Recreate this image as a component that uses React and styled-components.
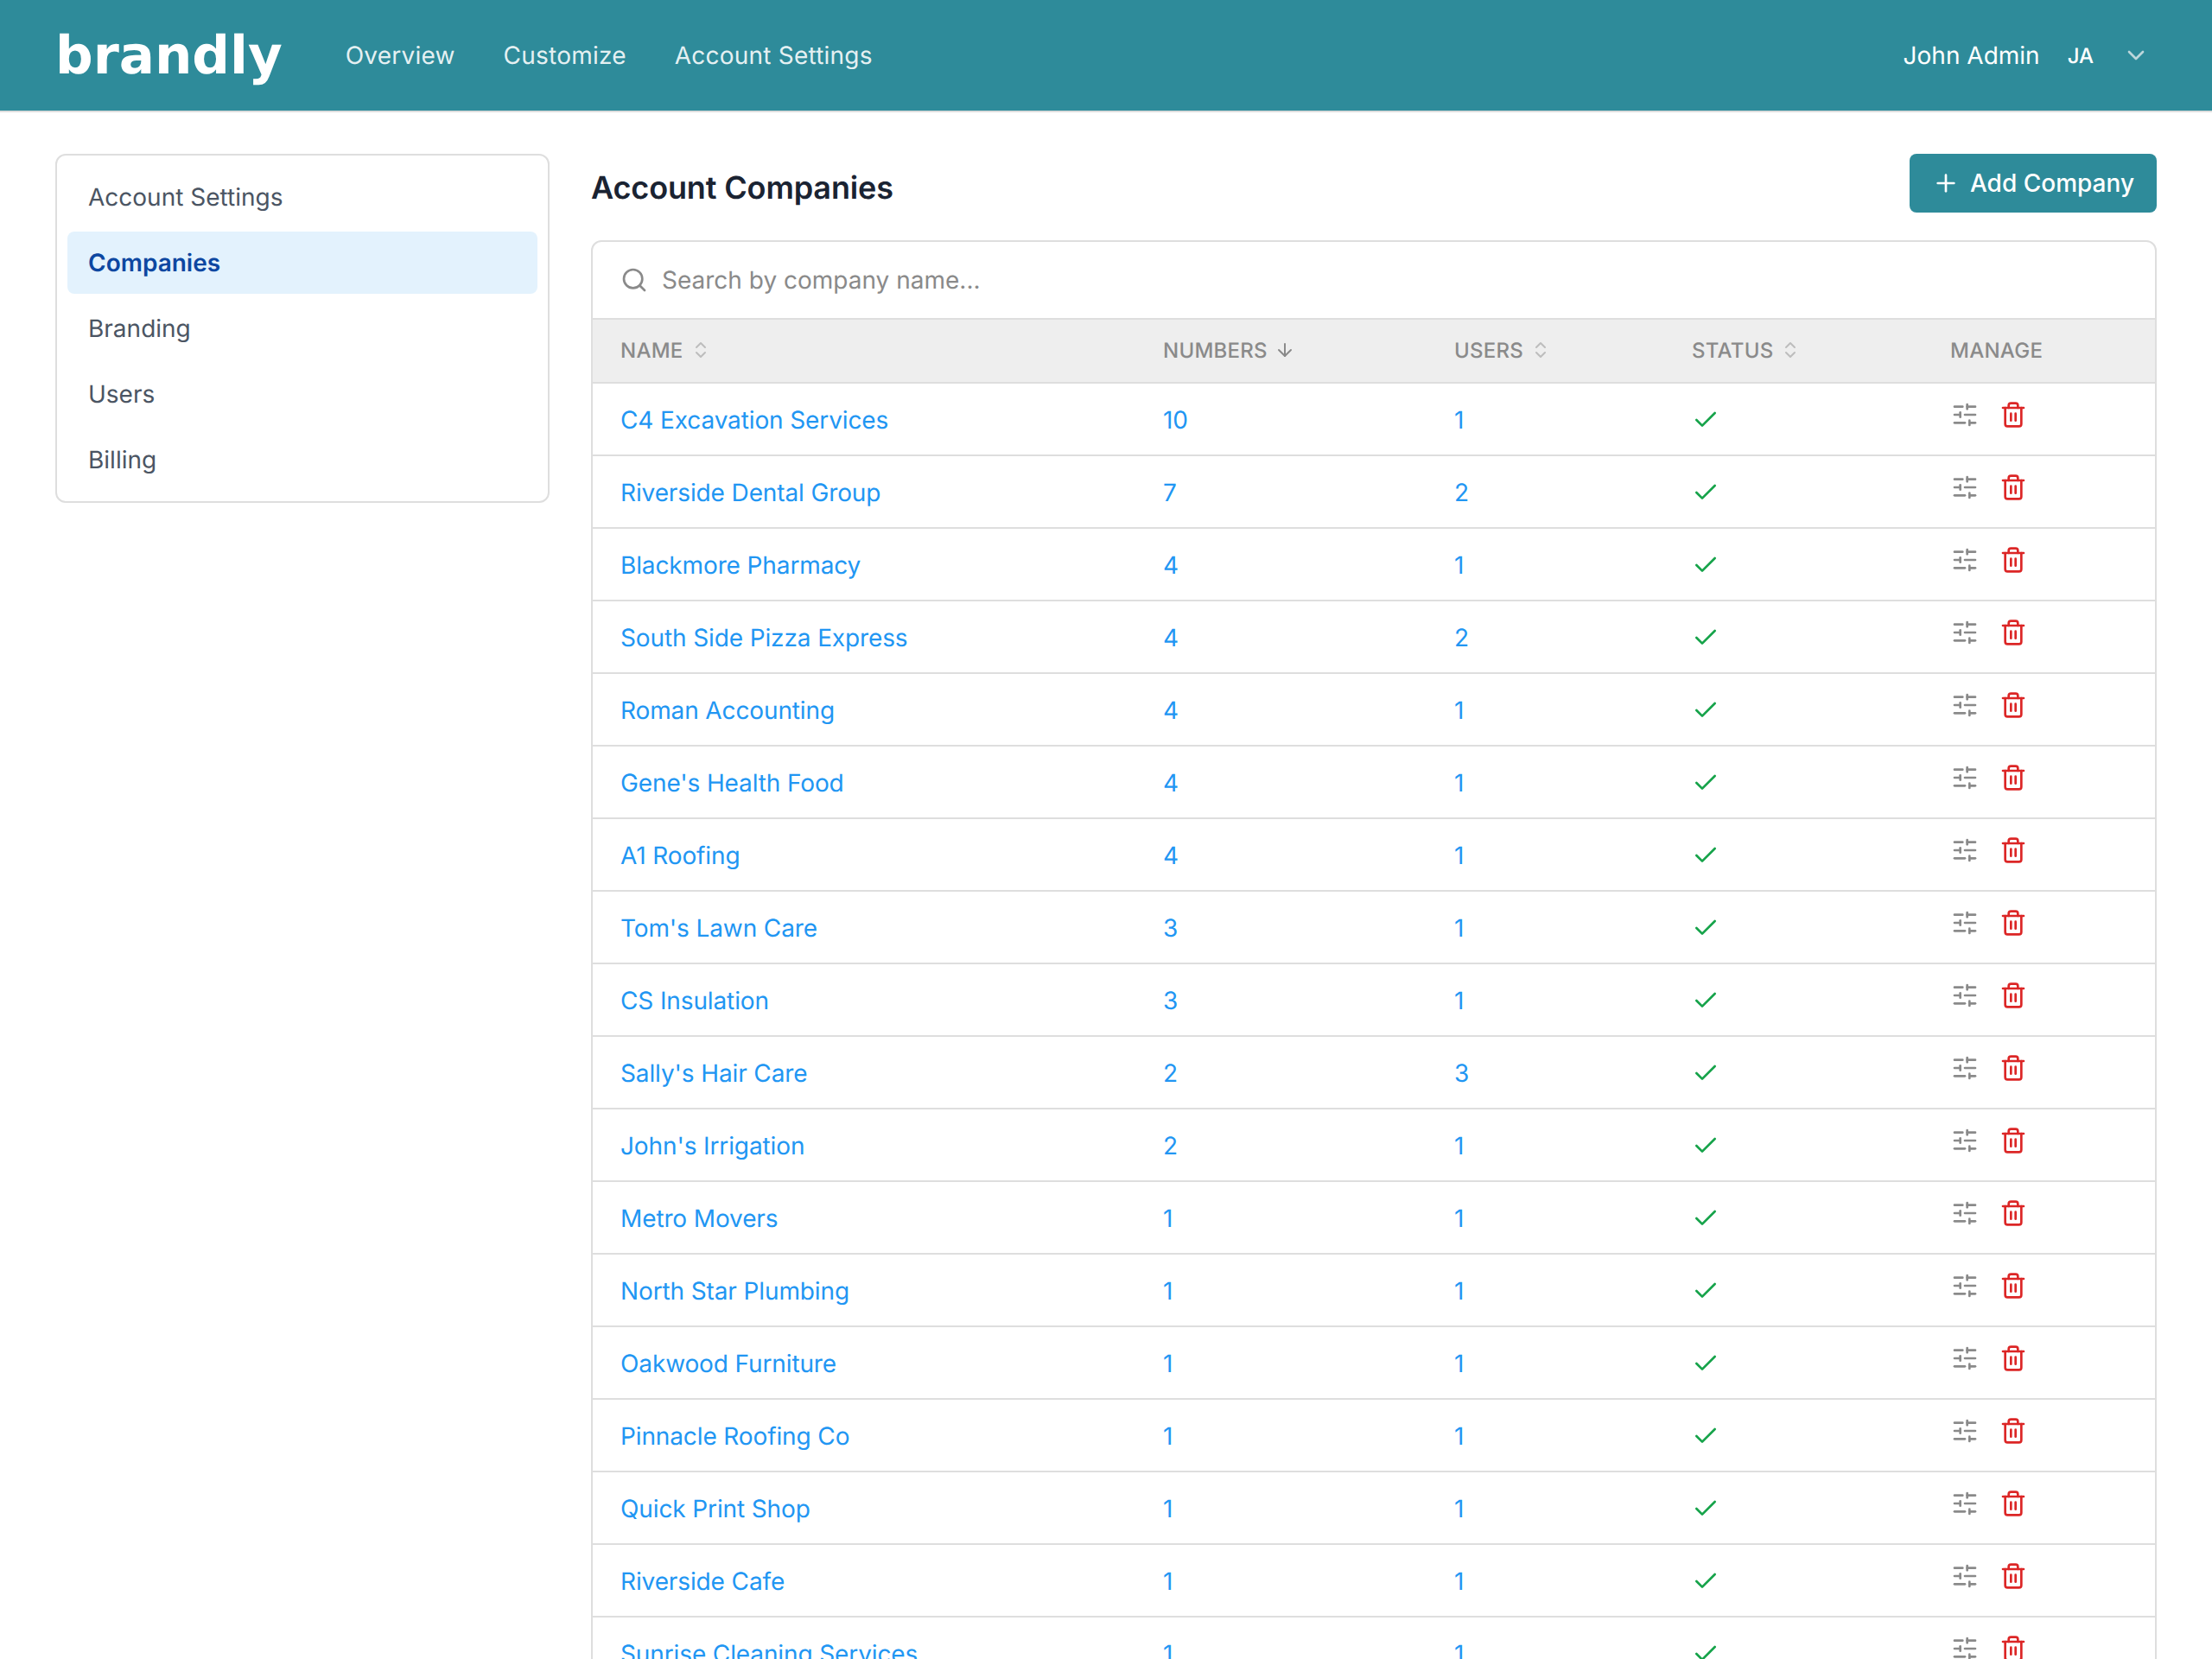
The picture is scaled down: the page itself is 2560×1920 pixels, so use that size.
import React from 'react'
import styled, { createGlobalStyle } from 'styled-components'
import { ArrowDown, Check, ChevronDown, ChevronsUpDown, Plus, Search, SlidersHorizontal, Trash2 } from 'lucide-react'

const companies = [
  ['C4 Excavation Services', 10, 1],
  ['Riverside Dental Group', 7, 2],
  ['Blackmore Pharmacy', 4, 1],
  ['South Side Pizza Express', 4, 2],
  ['Roman Accounting', 4, 1],
  ["Gene's Health Food", 4, 1],
  ['A1 Roofing', 4, 1],
  ["Tom's Lawn Care", 3, 1],
  ['CS Insulation', 3, 1],
  ["Sally's Hair Care", 2, 3],
  ["John's Irrigation", 2, 1],
  ['Metro Movers', 1, 1],
  ['North Star Plumbing', 1, 1],
  ['Oakwood Furniture', 1, 1],
  ['Pinnacle Roofing Co', 1, 1],
  ['Quick Print Shop', 1, 1],
  ['Riverside Cafe', 1, 1],
  ['Sunrise Cleaning Services', 1, 1],
]

const sideItems = ['Account Settings', 'Companies', 'Branding', 'Users', 'Billing']

export default function App() {
  return (
    <Page>
      <GlobalStyle />
      <Header>
        <Logo>brandly</Logo>
        <Nav>
          <NavLink>Overview</NavLink>
          <NavLink>Customize</NavLink>
          <NavLink>Account Settings</NavLink>
        </Nav>
        <UserMenu>
          <UserName>John Admin</UserName>
          <Initials>JA</Initials>
          <ChevronDown size={32} strokeWidth={2} color="#bcd6db" />
        </UserMenu>
      </Header>
      <Body>
        <Sidebar>
          {sideItems.map((item) => (
            <SideItem key={item} $active={item === 'Companies'}>{item}</SideItem>
          ))}
        </Sidebar>
        <Main>
          <TitleRow>
            <Title>Account Companies</Title>
            <AddButton>
              <Plus size={32} strokeWidth={2} />
              Add Company
            </AddButton>
          </TitleRow>
          <Card>
            <SearchBar>
              <Search size={32} strokeWidth={2} color="#8a8a8a" />
              <SearchText>Search by company name...</SearchText>
            </SearchBar>
            <HeadRow>
              <HeadCell>NAME <ChevronsUpDown size={24} color="#bdbdbd" /></HeadCell>
              <HeadCell>NUMBERS <ArrowDown size={24} color="#8a8a8a" /></HeadCell>
              <HeadCell>USERS <ChevronsUpDown size={24} color="#bdbdbd" /></HeadCell>
              <HeadCell>STATUS <ChevronsUpDown size={24} color="#bdbdbd" /></HeadCell>
              <HeadCell>MANAGE</HeadCell>
            </HeadRow>
            {companies.map(([name, numbers, users]) => (
              <Row key={name}>
                <LinkCell>{name}</LinkCell>
                <LinkCell>{numbers}</LinkCell>
                <LinkCell>{users}</LinkCell>
                <StatusCell><Check size={32} strokeWidth={2} color="#16a34a" /></StatusCell>
                <ManageCell>
                  <SlidersHorizontal size={32} strokeWidth={2} color="#8a8a8a" />
                  <Trash2 size={32} strokeWidth={2} color="#dc2626" />
                </ManageCell>
              </Row>
            ))}
          </Card>
        </Main>
      </Body>
    </Page>
  )
}

const GlobalStyle = createGlobalStyle`
  html, body {
    margin: 0;
    background: #fff;
    font-family: Inter, "Liberation Sans", sans-serif;
    text-rendering: geometricPrecision;
  }
`

const Page = styled.div`
  height: 1920px;
  overflow: hidden;
`

const Header = styled.header`
  display: flex;
  align-items: center;
  height: 128px;
  padding: 0 72px 0 64px;
  background: #2e8b9a;
  border-bottom: 2px solid #dedede;
`

const Logo = styled.div`
  font-family: "DejaVu Sans", sans-serif;
  font-weight: 700;
  font-size: 61px;
  line-height: 1;
  color: #fff;
  margin-right: 73px;
`

const Nav = styled.nav`
  display: flex;
  gap: 56px;
`

const NavLink = styled.a`
  font-size: 28px;
  letter-spacing: 0.22px;
  color: rgba(255, 255, 255, 0.9);
`

const UserMenu = styled.div`
  display: flex;
  align-items: center;
  margin-left: auto;
  color: #fff;
`

const UserName = styled.span`
  font-size: 28px;
  margin-right: 32px;
`

const Initials = styled.span`
  font-size: 24px;
  font-weight: 500;
  margin-right: 33px;
`

const Body = styled.div`
  display: flex;
  align-items: flex-start;
  gap: 48px;
  padding: 48px 64px 0;
`

const Sidebar = styled.aside`
  box-sizing: border-box;
  display: flex;
  flex-direction: column;
  gap: 4px;
  flex: 0 0 572px;
  height: 404px;
  padding: 12px;
  border: 2px solid #dedede;
  border-radius: 12px;
`

const SideItem = styled.a`
  display: flex;
  align-items: center;
  height: 72px;
  padding: 0 24px;
  border-radius: 8px;
  font-size: 28px;
  font-weight: ${(p) => (p.$active ? 600 : 400)};
  color: ${(p) => (p.$active ? '#0d47a1' : '#4b5563')};
  background: ${(p) => (p.$active ? '#e3f2fd' : 'transparent')};
`

const Main = styled.main`
  flex: 1;
  min-width: 0;
`

const TitleRow = styled.div`
  display: flex;
  align-items: flex-start;
  justify-content: space-between;
  margin-bottom: 32px;
`

const Title = styled.h1`
  margin: 17px 0 0;
  font-size: 36px;
  line-height: 44px;
  font-weight: 600;
  letter-spacing: -0.14px;
  color: #1a2332;
`

const AddButton = styled.button`
  display: flex;
  align-items: center;
  gap: 12px;
  height: 68px;
  padding: 0 26px;
  border: 0;
  border-radius: 8px;
  background: #2e8b9a;
  color: #fff;
  font-family: inherit;
  font-size: 28px;
  font-weight: 500;
`

const Card = styled.div`
  border: 2px solid #dedede;
  border-radius: 12px 12px 0 0;
`

const SearchBar = styled.div`
  display: flex;
  align-items: center;
  gap: 16px;
  height: 88px;
  padding: 0 32px;
`

const SearchText = styled.span`
  font-size: 28px;
  color: #8a8a8a;
`

const columns = '628px 337px 275px 299px 1fr'

const HeadRow = styled.div`
  display: grid;
  grid-template-columns: ${columns};
  align-items: center;
  height: 72px;
  background: #eeeeee;
  border-top: 2px solid #dedede;
  border-bottom: 2px solid #dedede;
`

const HeadCell = styled.div`
  display: flex;
  align-items: center;
  gap: 8px;
  padding: 0 0 2px 32px;
  font-size: 24px;
  font-weight: 500;
  letter-spacing: 0.25px;
  color: #8a8a8a;
`

const Row = styled.div`
  display: grid;
  grid-template-columns: ${columns};
  align-items: center;
  height: 82px;
  border-bottom: 2px solid #dedede;
`

const LinkCell = styled.a`
  padding: 2px 0 0 32px;
  font-size: 28px;
  letter-spacing: -0.12px;
  color: #2196f3;
`

const StatusCell = styled.div`
  display: flex;
  padding: 1px 0 0 32px;
`

const ManageCell = styled.div`
  display: flex;
  align-items: center;
  gap: 24px;
  padding-left: 33px;
  margin-top: -10px;
`
